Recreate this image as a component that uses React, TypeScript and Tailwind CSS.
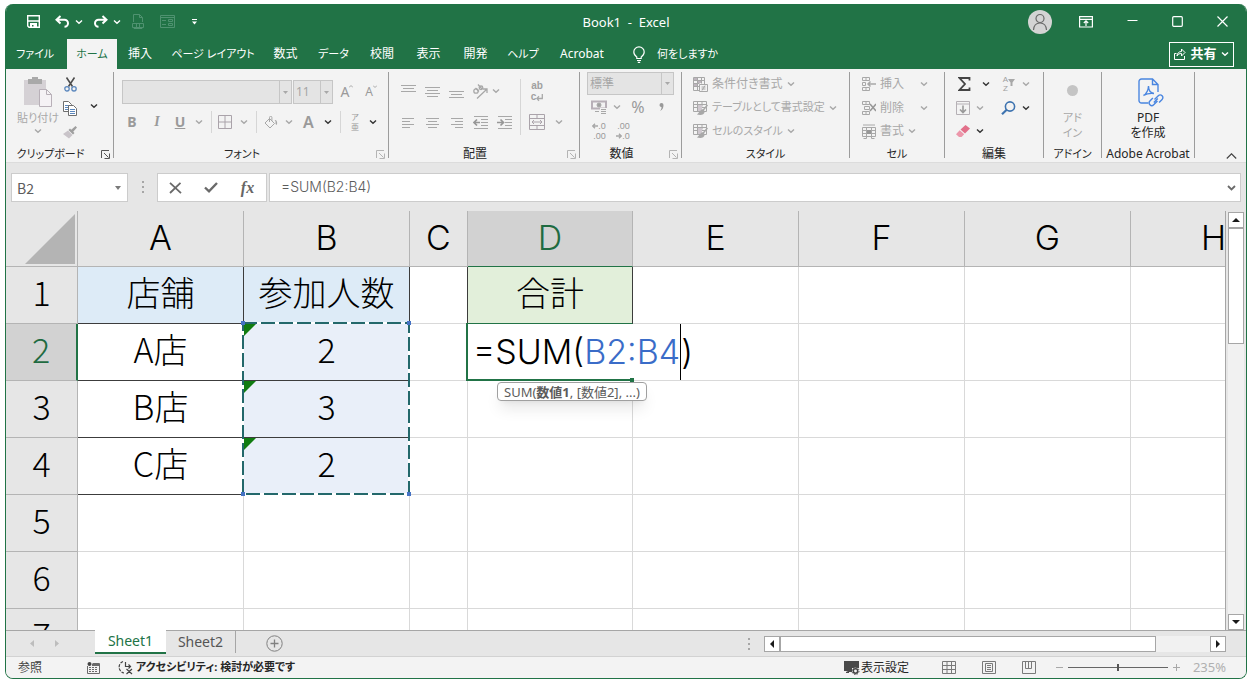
import React from 'react';

const UI_FONT = "font-['Noto_Sans','Noto_Sans_CJK_JP',sans-serif] [font-feature-settings:'palt']";
const CELL_FONT = "font-['Noto_Sans_CJK_JP',sans-serif] font-light";
const LATIN_FONT = "font-['Inter','Noto_Sans_CJK_JP',sans-serif] font-light";

interface IconProps {
    w: number;
    h: number;
    color?: string;
    strokeWidth?: number;
    className?: string;
    children: React.ReactNode;
}

const Icon: React.FC<IconProps> = ({ w, h, color = '#a8a8a8', strokeWidth = 1, className = '', children }) => (
    <svg
        width={w}
        height={h}
        viewBox={`0 0 ${w} ${h}`}
        fill="none"
        stroke={color}
        strokeWidth={strokeWidth}
        className={`shrink-0 ${className}`}
        aria-hidden="true"
    >
        {children}
    </svg>
);

const Chevron: React.FC<{ color?: string }> = ({ color = '#a8a8a8' }) => (
    <Icon w={8} h={6} color={color} strokeWidth={1.4}>
        <path d="M1 1.5 4 4.3 7 1.5" />
    </Icon>
);

const DARK = '#333333';

interface ToolProps {
    label: string;
    className?: string;
    children: React.ReactNode;
}

const Tool: React.FC<ToolProps> = ({ label, className = 'w-6', children }) => (
    <button type="button" aria-label={label} className={`flex h-6 shrink-0 items-center justify-center ${className}`}>
        {children}
    </button>
);

const Lines: React.FC<{ rows: [number, number][]; top?: number }> = ({ rows, top = 0 }) => (
    <Icon w={15} h={15}>
        {rows.map(([x, len], i) => (
            <path key={i} d={`M${x} ${top + i * 3 + 0.5}h${len}`} />
        ))}
    </Icon>
);

interface GroupProps {
    title: string;
    className: string;
    launcher?: string;
    children: React.ReactNode;
}

const Group: React.FC<GroupProps> = ({ title, className, launcher, children }) => (
    <section className={`flex h-[86px] shrink-0 flex-col border-r border-[#9c9c9c] ${className}`}>
        <div className="flex h-[74px]">{children}</div>
        <div
            className={`relative flex h-3 justify-center pt-[2px] leading-3 whitespace-nowrap text-[#262626] ${launcher ? 'pr-[18px]' : ''}`}
        >
            <span>{title}</span>
            {launcher && (
                <button type="button" aria-label={`${title}の設定`} className="absolute top-1 right-[3px]">
                    <Icon w={9} h={9} color={launcher}>
                        <path d="M.5 8V.5H8M3 3l4.5 4.5M8.5 3.5v5h-5" />
                    </Icon>
                </button>
            )}
        </div>
    </section>
);

const Combo: React.FC<{ label: string; value: string; className: string }> = ({ label, value, className }) => (
    <div className={`flex items-center border border-[#c6c6c6] bg-[#e4e4e4] ${className}`}>
        <select aria-label={label} className="h-full min-w-0 flex-1 appearance-none pl-[2px] text-xs text-[#a6a6a6] outline-none">
            <option>{value}</option>
        </select>
        <span className="flex h-full w-3 items-center justify-center border-l border-[#c6c6c6]">
            <Icon w={5} h={3} color="none">
                <path d="M0 0h5L2.5 3z" fill="#a8a8a8" />
            </Icon>
        </span>
    </div>
);

const Separator: React.FC<{ className?: string }> = ({ className = 'h-[22px]' }) => (
    <span className={`w-px shrink-0 bg-[#d6d6d6] ${className}`} />
);

const TitleBar = () => (
    <header className="grid h-[35px] shrink-0 grid-cols-[1fr_auto_1fr] items-center text-white">
        <div className="flex items-center pl-2">
            <Tool label="上書き保存" className="w-[39px]">
                <Icon w={13} h={13} color="#ffffff" strokeWidth={1.4}>
                    <path d="M.7.7h11.6v11.6H2L.7 11z" />
                    <path d="M.7 6h11.6" strokeWidth={1.6} />
                    <path d="M3 8h7v4H6.5v-2H5v2H3z" fill="#ffffff" stroke="none" />
                </Icon>
            </Tool>
            <Tool label="元に戻す" className="w-[18px]">
                <Icon w={15} h={13} color="#ffffff" strokeWidth={2}>
                    <path d="M5.5 1 1.5 4.8l4 3.7M2 4.8h7.5a3.5 3.5 0 0 1 0 7" />
                </Icon>
            </Tool>
            <Tool label="元に戻すの一覧" className="w-4">
                <Chevron color="#ffffff" />
            </Tool>
            <Tool label="やり直し" className="w-[26px]">
                <Icon w={15} h={13} color="#ffffff" strokeWidth={2}>
                    <path d="m9.5 1 4 3.8-4 3.7M13 4.8H5.5a3.5 3.5 0 0 0 0 7" />
                </Icon>
            </Tool>
            <Tool label="やり直しの一覧" className="w-2">
                <Chevron color="#ffffff" />
            </Tool>
            <Tool label="印刷" className="w-[34px]">
                <Icon w={12} h={15} color="#4f9270">
                    <path d="M1.5 8V.5h6l3 3V8M7.5.5v3h3M.5 9.5h11v4H.5zM4.5 9.5v4h3v-4M2 13.5v1h8v-1" />
                </Icon>
            </Tool>
            <Tool label="フォーム" className="w-6">
                <Icon w={15} h={13} color="#4f9270">
                    <path d="M.5.5h14v12H.5zM.5 2.5h14M2 5.5h4M2 9.5h4M8.5 4.5h4v2h-4zM8.5 8.5h4v2h-4z" />
                </Icon>
            </Tool>
            <Tool label="クイック アクセスのカスタマイズ" className="w-[30px]">
                <Icon w={5} h={6} color="none">
                    <path d="M0 0h5v1H0zM0 2.5h5L2.5 5.5z" fill="#ffffff" />
                </Icon>
            </Tool>
        </div>
        <h1 className="pt-[2px] text-[13px] whitespace-pre">Book1  -  Excel</h1>
        <div className="flex items-center justify-end pr-[18px]">
            <button type="button" aria-label="アカウント" className="mr-[27px] flex size-6 items-center justify-center rounded-full bg-[#d4d4d4]">
                <Icon w={16} h={18} color="#6a6a6a" strokeWidth={1.2}>
                    <circle cx="8" cy="5.5" r="4" />
                    <path d="M1.5 17c.3-4.5 3-7 6.5-7s6.2 2.5 6.5 7" />
                </Icon>
            </button>
            <button type="button" aria-label="リボンの表示オプション" className="mr-[34px]">
                <Icon w={14} h={12} color="#ffffff" strokeWidth={1.2}>
                    <path d="M.6.6h12.8v10.4H.6zM.6 3.3h12.8M7 10V5M4.8 7 7 4.8 9.2 7" />
                </Icon>
            </button>
            <button type="button" aria-label="最小化" className="mr-[34px]">
                <Icon w={11} h={11} color="#ffffff">
                    <path d="M.5 4.5h10" />
                </Icon>
            </button>
            <button type="button" aria-label="最大化" className="mr-[34px]">
                <Icon w={11} h={11} color="#ffffff" strokeWidth={1.2}>
                    <rect x=".7" y=".7" width="9.6" height="9.6" rx="1" />
                </Icon>
            </button>
            <button type="button" aria-label="閉じる">
                <Icon w={11} h={11} color="#ffffff" strokeWidth={1.2}>
                    <path d="m.5.5 10 10M10.5.5l-10 10" />
                </Icon>
            </button>
        </div>
    </header>
);

const ribbonTabs = [
    { name: 'ファイル', className: 'w-[58px] mr-[3px] text-[11px]' },
    { name: 'ホーム', className: 'w-[50px] bg-[#f3f3f3] text-[11px] text-[#217346]' },
    { name: '挿入', className: 'w-[46px]' },
    { name: 'ページ レイアウト', className: 'w-[100px] text-[11px]' },
    { name: '数式', className: 'w-[45px]' },
    { name: 'データ', className: 'w-[51px] text-[11px]' },
    { name: '校閲', className: 'w-[46px]' },
    { name: '表示', className: 'w-[47px]' },
    { name: '開発', className: 'w-[47px]' },
    { name: 'ヘルプ', className: 'w-12 text-[11px]' },
    { name: 'Acrobat', className: 'w-[70px]' },
];

const RibbonTabs = () => (
    <nav className="flex h-[30px] shrink-0 items-stretch text-xs text-white">
        {ribbonTabs.map((tab) => (
            <button key={tab.name} type="button" className={`shrink-0 whitespace-nowrap ${tab.className}`}>
                {tab.name}
            </button>
        ))}
        <button type="button" className="flex items-center gap-3 pl-4 text-[11px] whitespace-nowrap">
            <Icon w={12} h={17} color="#ffffff" strokeWidth={1.2}>
                <path d="M3.8 12.5V11C2 9.8.8 8.3.8 6a5.2 5.2 0 0 1 10.4 0c0 2.3-1.2 3.8-3 5v1.5zM4 14.5h4M4.8 16.4h2.4" />
            </Icon>
            何をしますか
        </button>
        <button
            type="button"
            className="mr-3 ml-auto flex h-[25px] w-[65px] shrink-0 items-center justify-center gap-1 self-center border border-white text-[13px] font-bold"
        >
            <Icon w={12} h={12} color="#ffffff">
                <path d="M2.5 5.5h-2v6h10V8M3 8c.3-3 2-4.5 4.5-4.5V1L11 4.5 7.5 8V5.5C5.5 5.5 4 6 3 8z" />
            </Icon>
            共有
            <Chevron color="#ffffff" />
        </button>
    </nav>
);

const ClipboardGroup = () => (
    <Group title="クリップボード" className="w-[108px] text-[11px]" launcher="#555555">
        <button type="button" className="ml-2 flex w-12 flex-col items-center pt-1 text-[11px] leading-4 whitespace-nowrap text-[#a8a8a8]">
            <Icon w={28} h={31}>
                <path d="M0 4h22v25H0z" fill="#d5d1d5" stroke="none" />
                <path d="M4 3h4V1h6v2h4v5H4z" fill="#a9a9a9" stroke="none" />
                <path d="M15.5 13.5h7l5 5v12h-12z" fill="#f5f2f5" stroke="#b8b0b8" />
                <path d="M22.5 13.5v5h5" stroke="#b8b0b8" />
            </Icon>
            <span className="mt-[3px] mb-[2px]">貼り付け</span>
            <Chevron />
        </button>
        <div className="flex w-4 flex-col">
            <Tool label="切り取り" className="w-4">
                <Icon w={13} h={15} color="#4f4f4f" strokeWidth={1.6}>
                    <path d="m2.5.5 6 9M10.5.5l-6 9" />
                    <circle cx="3" cy="11.8" r="2.2" stroke="#5b87bd" strokeWidth={1.3} />
                    <circle cx="10" cy="11.8" r="2.2" stroke="#5b87bd" strokeWidth={1.3} />
                </Icon>
            </Tool>
            <Tool label="コピー" className="w-4">
                <Icon w={14} h={15} color="#6f6f6f">
                    <path d="M.5.5h5l3 3v7h-8z" fill="#ffffff" />
                    <path d="M2 4.5h4M2 6.5h4M2 8.5h4" stroke="#5b87bd" />
                    <path d="M5.5 4.5h5l3 3v7h-8z" fill="#ffffff" />
                    <path d="M7 8.5h5M7 10.5h5M7 12.5h5" stroke="#5b87bd" />
                </Icon>
            </Tool>
            <Tool label="書式のコピー/貼り付け" className="w-4">
                <Icon w={14} h={13} color="none">
                    <path d="M12.5 0 14 1.5 10 6 8 4zM7 2.5 11.5 7 10 8.5 5.5 4z" fill="#9f9f9f" />
                    <path d="M5 4.5 9.5 9 6 12.5 0 8z" fill="#c9c4c9" />
                </Icon>
            </Tool>
        </div>
        <Tool label="コピーの一覧" className="mt-[22px] w-[31px]">
            <Chevron color={DARK} />
        </Tool>
    </Group>
);

const FontGroup = () => (
    <Group title="フォント" className="w-[275px] text-[11px]" launcher="#b4b4b4">
        <div className="flex flex-col pt-2">
            <div className="flex items-center pl-2 text-sm text-[#9a9a9a]">
                <Combo label="フォント" value="" className="h-6 w-[170px]" />
                <Combo label="フォント サイズ" value="11" className="ml-px h-6 w-10" />
                <Tool label="フォント サイズの拡大" className="ml-[2px] w-6">
                    A
                    <Icon w={4} h={3} className="mb-3">
                        <path d="m0 2.5 2-2 2 2" />
                    </Icon>
                </Tool>
                <Tool label="フォント サイズの縮小">
                    <span className="text-xs">A</span>
                    <Icon w={4} h={3} className="mb-3">
                        <path d="m0 .5 2 2 2-2" />
                    </Icon>
                </Tool>
            </div>
            <div className="mt-[6px] flex items-center pl-[6px] text-sm text-[#9a9a9a]">
                <Tool label="太字">
                    <b>B</b>
                </Tool>
                <Tool label="斜体" className="w-[26px]">
                    <i className="font-['Liberation_Serif',serif] font-bold">I</i>
                </Tool>
                <Tool label="下線" className="w-5">
                    <span className="font-bold underline">U</span>
                </Tool>
                <Tool label="下線の種類" className="w-[18px]">
                    <Chevron />
                </Tool>
                <Separator className="ml-[3px] h-[22px]" />
                <Tool label="罫線" className="w-[26px]">
                    <Icon w={14} h={14} color="#aaa3aa">
                        <path d="M.5.5h13v13H.5zM7 .5v13M.5 7h13" />
                    </Icon>
                </Tool>
                <Tool label="罫線の種類" className="w-3">
                    <Chevron />
                </Tool>
                <Separator className="ml-[6px] h-[22px]" />
                <Tool label="塗りつぶしの色" className="w-[28px]">
                    <Icon w={14} h={13}>
                        <path d="m5.5 2.5 5 5-4.5 4.5-5-5zM5.5 6V1.5a1.2 1.2 0 0 1 2.4 0V5" />
                        <path d="M11.5 8c0-2 .5-3-1-4 2.5 0 3 2 2.5 5z" fill="#a8a8a8" stroke="none" />
                    </Icon>
                </Tool>
                <Tool label="塗りつぶしの色の一覧" className="w-2">
                    <Chevron />
                </Tool>
                <Tool label="フォントの色" className="w-[31px]">
                    <span className="text-base font-semibold">A</span>
                </Tool>
                <Tool label="フォントの色の一覧" className="w-2">
                    <Chevron color={DARK} />
                </Tool>
                <Separator className="ml-2 h-[22px]" />
                <Tool label="ふりがな" className="w-[28px]">
                    <span className="flex flex-col text-[8px] leading-[10px]">
                        <span>ア</span>
                        <span>亜</span>
                    </span>
                </Tool>
                <Tool label="ふりがなの一覧" className="w-2">
                    <Chevron color={DARK} />
                </Tool>
            </div>
        </div>
    </Group>
);

const AlignmentGroup = () => (
    <Group title="配置" className="w-[191px] text-xs" launcher="#b4b4b4">
        <div className="flex flex-col pt-[7px] pl-[7px]">
            <div className="flex">
                <Tool label="上揃え"><Lines rows={[[0, 15], [2, 11], [0, 15]]} top={1} /></Tool>
                <Tool label="上下中央揃え"><Lines rows={[[0, 15], [2, 11], [0, 15], [2, 11]]} top={3} /></Tool>
                <Tool label="下揃え"><Lines rows={[[0, 15], [2, 11], [0, 15]]} top={7} /></Tool>
                <Tool label="方向">
                    <Icon w={16} h={15} strokeWidth={1.3}>
                        <path d="m5 14.5 9.5-9M11 5h4v4" />
                        <circle cx="4" cy="7" r="2.2" />
                        <path d="M3.5 4 7 7.5M6 .5l4 4.5" />
                        <circle cx="9" cy="3.8" r="1.8" />
                    </Icon>
                </Tool>
                <Tool label="方向の一覧" className="w-2"><Chevron /></Tool>
            </div>
            <div className="mt-[7px] flex">
                <Tool label="左揃え"><Lines rows={[[1, 12], [1, 8], [1, 12], [1, 8]]} top={3} /></Tool>
                <Tool label="中央揃え"><Lines rows={[[1, 13], [3, 9], [1, 13], [3, 9]]} top={3} /></Tool>
                <Tool label="右揃え"><Lines rows={[[2, 12], [6, 8], [2, 12], [6, 8]]} top={3} /></Tool>
                <Tool label="インデントを減らす">
                    <Icon w={15} h={13}>
                        <path d="M1 .5h14M8 3.5h7M8 6.5h7M8 9.5h7M1 12.5h14" />
                        <path d="M7 6.5H1M4 3.5l-3 3 3 3" strokeWidth={1.7} stroke="#979797" />
                    </Icon>
                </Tool>
                <Tool label="インデントを増やす">
                    <Icon w={15} h={13}>
                        <path d="M1 .5h14M8 3.5h7M8 6.5h7M8 9.5h7M1 12.5h14" />
                        <path d="M0 6.5h6M3.5 3.5l3 3-3 3" strokeWidth={1.7} stroke="#979797" />
                    </Icon>
                </Tool>
            </div>
        </div>
        <Separator className="mt-[7px] ml-1 h-[56px]" />
        <div className="flex flex-col pt-[7px]">
            <Tool label="折り返して全体を表示する" className="w-8">
                <span className="flex flex-col font-['Liberation_Sans',sans-serif] text-[10px] leading-[11px] font-bold text-[#a0a0a0]">
                    <span>ab</span>
                    <span className="flex items-end">
                        c
                        <Icon w={7} h={8} strokeWidth={1.3}>
                            <path d="M6.3 0v4.5H1M3 2.3.8 4.5 3 6.7" />
                        </Icon>
                    </span>
                </span>
            </Tool>
            <div className="mt-[7px] flex">
                <Tool label="セルを結合して中央揃え" className="w-8">
                    <Icon w={16} h={16} color="#aaa3aa">
                        <path d="M.5.5h15v15H.5zM.5 4.5h15M.5 11.5h15M8 .5v4M8 11.5v4M3 8h10M5 6 3 8l2 2M11 6l2 2-2 2" />
                    </Icon>
                </Tool>
                <Tool label="結合の一覧" className="w-3"><Chevron /></Tool>
            </div>
        </div>
    </Group>
);

const LeftArrow = () => (
    <Icon w={6} h={6} strokeWidth={1.4}>
        <path d="M6 3H1M3 .8.8 3 3 5.2" />
    </Icon>
);

const RightArrow = () => (
    <Icon w={6} h={6} strokeWidth={1.4}>
        <path d="M0 3h5M3 .8 5.2 3 3 5.2" />
    </Icon>
);

const NumberGroup = () => (
    <Group title="数値" className="w-[102px] text-xs" launcher="#b4b4b4">
        <div className="flex flex-col pl-[7px]">
            <Combo label="表示形式" value="標準" className="h-[23px] w-[87px]" />
            <div className="flex text-[#9a9a9a]">
                <Tool label="通貨表示形式">
                    <Icon w={16} h={15}>
                        <path d="M1 1.5h14v7H1z" strokeWidth={2} stroke="#b8b0b8" />
                        <circle cx="8" cy="5" r="2" fill="#a0a0a0" />
                        <path d="M9 8h7v7H9z" fill="#f3f3f3" stroke="none" />
                        <path d="M10 9.5h5M10 11.5h5M10 13.5h5M4 11.5h4" />
                    </Icon>
                </Tool>
                <Tool label="通貨の一覧" className="w-3"><Chevron /></Tool>
                <Tool label="パーセント スタイル" className="w-[30px] text-base">%</Tool>
                <Tool label="桁区切りスタイル" className="w-4">
                    <Icon w={5} h={8} color="none">
                        <path d="M.5 2a2 2 0 1 1 4 0c0 3-1 5-3.5 6 1.2-1.5 1.5-2.5 1.5-4-1.2 0-2-.8-2-2z" fill="#999999" />
                    </Icon>
                </Tool>
            </div>
            <div className="flex font-['Liberation_Sans',sans-serif] text-[9px] leading-[10px] text-[#9a9a9a]">
                <Tool label="小数点以下の表示桁数を増やす">
                    <span className="flex flex-col items-end">
                        <span className="flex items-center"><LeftArrow />.0</span>
                        <span>.00</span>
                    </span>
                </Tool>
                <Tool label="小数点以下の表示桁数を減らす">
                    <span className="flex flex-col items-end">
                        <span>.00</span>
                        <span className="flex items-center"><RightArrow />.0</span>
                    </span>
                </Tool>
            </div>
        </div>
    </Group>
);

const TableIcon = () => (
    <Icon w={15} h={14}>
        <path d="M.5.5h13v10H.5zM.5 3.5h13M.5 6.5h13M4.5.5v10M9 .5v5" />
        <path d="M5 4h4v6H5z" fill="#cfc8cf" stroke="none" />
        <path d="m14.5 4-5 6M9.5 9c-1.5.5-2 2-4 4 3 .5 5-.5 5.5-2.5z" fill="#a8a8a8" strokeWidth={1.5} />
    </Icon>
);

const StylesGroup = () => (
    <Group title="スタイル" className="w-[168px] text-[11px]">
        <div className="flex flex-col pl-[11px] text-[11px] text-[#a8a8a8]">
            <button type="button" className="flex h-6 items-center gap-1 text-xs whitespace-nowrap">
                <Icon w={15} h={15}>
                    <path d="M.5.5h11v13H.5zM.5 3.5h11M.5 6.5h6M.5 9.5h6M4.5.5v13M8.5.5v6" />
                    <path d="M1 1h3v2H1zM1 7h3v2H1zM5 4h3v2H5z" fill="#bdb5bd" stroke="none" />
                    <path d="M6.5 7.5h8v7h-8z" fill="#f3f3f3" />
                    <path d="M8.5 10h4M8.5 12h4M12 8.5l-3 5" />
                </Icon>
                条件付き書式
                <Chevron />
            </button>
            <button type="button" className="flex h-[23px] items-center gap-1 whitespace-nowrap">
                <TableIcon />
                テーブルとして書式設定
                <Chevron />
            </button>
            <button type="button" className="flex h-6 items-center gap-1 whitespace-nowrap">
                <TableIcon />
                セルのスタイル
                <Chevron />
            </button>
        </div>
    </Group>
);

const CellsGroup = () => (
    <Group title="セル" className="w-[95px] text-[11px]">
        <div className="flex flex-col pl-3 text-xs text-[#a8a8a8]">
            <button type="button" className="flex h-6 w-[66px] items-center gap-1">
                <Icon w={14} h={14}>
                    <path d="M.5.5h7v3h-7zM4 .5v3M.5 10.5h7v3h-7zM4 10.5v3M.5 5.5h3v3h-3z" />
                    <path d="M14 7H6M8.5 4.5 6 7l2.5 2.5" strokeWidth={1.5} />
                </Icon>
                挿入
                <span className="ml-auto"><Chevron /></span>
            </button>
            <button type="button" className="flex h-[23px] w-[66px] items-center gap-1">
                <Icon w={14} h={14}>
                    <path d="M.5.5h7v3h-7zM4 .5v3M.5 10.5h7v3h-7zM4 10.5v3M2.5 5.5h5v3h-5z" />
                    <path d="m8 3 6 7M14 3l-6 7" strokeWidth={1.5} stroke="#979797" />
                </Icon>
                削除
                <span className="ml-auto"><Chevron /></span>
            </button>
            <button type="button" className="flex h-6 items-center gap-1">
                <Icon w={14} h={15}>
                    <path d="M.5 3.5h13v9H.5zM.5 6.5h13M.5 9.5h13M4.5 3.5v11h-3M9.5 3.5v11h3M1 1h12" />
                    <path d="M5 6h4v4H5z" fill="#979797" stroke="none" />
                </Icon>
                書式
                <Chevron />
            </button>
        </div>
    </Group>
);

const EditingGroup = () => (
    <Group title="編集" className="w-[99px] text-xs">
        <div className="flex flex-col pl-[7px]">
            <div className="flex">
                <Tool label="合計">
                    <Icon w={13} h={14} color="#444444" strokeWidth={1.8}>
                        <path d="M11.5 3.5V1H1.5L7 7l-5.5 6h10v-2.5" />
                    </Icon>
                </Tool>
                <Tool label="合計の一覧" className="w-5"><Chevron color={DARK} /></Tool>
                <Tool label="並べ替えとフィルター" className="w-[26px]">
                    <span className="flex flex-col font-['Liberation_Sans',sans-serif] text-[8px] leading-[9px] text-[#a0a0a0]">
                        <span>A</span>
                        <span>Z</span>
                    </span>
                    <Icon w={7} h={7} color="none" className="mb-1">
                        <path d="M0 0h7L4.5 3.5V7h-2V3.5z" fill="#a8a8a8" />
                    </Icon>
                </Tool>
                <Tool label="並べ替えの一覧" className="w-2"><Chevron /></Tool>
            </div>
            <div className="flex h-[23px] items-center">
                <Tool label="フィル" className="w-[22px]">
                    <Icon w={14} h={14} color="#b5b0b5">
                        <path d="M.5.5h13v13H.5zM.5 3h13" />
                        <path d="M7 4.5V11M4 8.5l3 3 3-3" strokeWidth={1.6} stroke="#999999" />
                    </Icon>
                </Tool>
                <Tool label="フィルの一覧" className="w-3"><Chevron /></Tool>
                <Tool label="検索と選択" className="ml-2 w-7">
                    <Icon w={15} h={14} color="#3f74b0" strokeWidth={1.6}>
                        <circle cx="9" cy="5.5" r="4.6" />
                        <path d="M5.7 8.8 1 13.2" strokeWidth={2.2} />
                    </Icon>
                </Tool>
                <Tool label="検索の一覧" className="w-2"><Chevron color={DARK} /></Tool>
            </div>
            <div className="flex">
                <Tool label="クリア" className="w-[22px]">
                    <Icon w={14} h={12} color="none">
                        <path d="M9.5 0 14 3.5 9 8.5 4.5 4.5z" fill="#e2708a" />
                        <path d="M3.7 5.2 8.2 9.3 5.5 12H3L0 9.2z" fill="#ec96aa" />
                    </Icon>
                </Tool>
                <Tool label="クリアの一覧" className="w-3"><Chevron color={DARK} /></Tool>
            </div>
        </div>
    </Group>
);

const Ribbon = () => (
    <div className="flex h-[94px] shrink-0 border-b border-[#dcdcdc] bg-[#f3f3f3] pt-[3px]">
        <ClipboardGroup />
        <FontGroup />
        <AlignmentGroup />
        <NumberGroup />
        <StylesGroup />
        <CellsGroup />
        <EditingGroup />
        <Group title="アドイン" className="w-[58px] text-[11px]">
            <button type="button" className="flex w-full flex-col items-center pt-[13px] leading-[15px] text-[#a8a8a8]">
                <span className="mb-[14px] size-[11px] rounded-full bg-[#c4c4c4]" />
                <span>アド</span>
                <span>イン</span>
            </button>
        </Group>
        <Group title="Adobe Acrobat" className="w-[93px] text-xs">
            <button type="button" className="flex w-full flex-col items-center pt-[6px] text-xs leading-[15px] text-[#262626]">
                <Icon w={26} h={30} color="#4a86e0" strokeWidth={1.4} className="mb-[2px] ml-[6px]">
                    <path d="M10 25H3.5a2.5 2.5 0 0 1-2.5-2.5v-19A2.5 2.5 0 0 1 3.5 1h11L20 6.5V14M14.5 1v5.5H20" />
                    <path d="M5.5 17.5c3-1.5 5-6 5-9.5 0 4.5 2.5 7 5.5 7.5-4-.5-7 0-10.5 2z" />
                    <path d="m16.5 21.5 3.8-3.8a2.6 2.6 0 0 1 3.8 3.8l-3 3" />
                    <path d="m19.5 23-3.8 3.8a2.6 2.6 0 0 1-3.8-3.8l3-3M15.8 24.5l4-4" />
                </Icon>
                <span>PDF</span>
                <span>を作成</span>
            </button>
        </Group>
        <button type="button" aria-label="リボンを折りたたむ" className="mt-auto mr-[9px] mb-[3px] ml-auto">
            <Icon w={11} h={6} color="#444444" strokeWidth={1.2}>
                <path d="m.8 5.5 4.7-4.7 4.7 4.7" />
            </Icon>
        </button>
    </div>
);

const Dots = () => (
    <Icon w={2} h={12} color="none">
        <path d="M0 0h2v2H0zM0 5h2v2H0zM0 10h2v2H0z" fill="#a6a6a6" />
    </Icon>
);

const FormulaBar = () => (
    <div className="flex h-12 shrink-0 items-start pt-[10px] pr-[5px] pl-[5px] text-[#5c5c5c]">
        <div className="flex h-[29px] w-[117px] items-center border border-[#cccccc] bg-white pr-[6px]">
            <input
                aria-label="名前ボックス"
                defaultValue="B2"
                className="min-w-0 flex-1 pl-[5px] font-['Noto_Sans_CJK_JP',sans-serif] text-sm leading-5 outline-none"
            />
            <button type="button" aria-label="名前の一覧">
                <Icon w={6} h={4} color="none">
                    <path d="M0 0h6L3 4z" fill="#7a7a7a" />
                </Icon>
            </button>
        </div>
        <span className="flex h-7 w-[29px] items-center justify-center"><Dots /></span>
        <div className="flex h-[29px] w-[110px] items-center border border-[#cccccc] bg-white">
            <Tool label="キャンセル" className="w-[34px]">
                <Icon w={13} h={12} color="#6a6a6a" strokeWidth={1.8}>
                    <path d="m1 .8 11 10.4M11.5.8 1 11" />
                </Icon>
            </Tool>
            <Tool label="入力" className="w-[37px]">
                <Icon w={14} h={11} color="#6a6a6a" strokeWidth={2.4}>
                    <path d="M1 5.5 5 9.3 13 1" />
                </Icon>
            </Tool>
            <Tool label="関数の挿入" className="w-[37px]">
                <i className="font-['Liberation_Serif',serif] text-base font-bold text-[#666666]">fx</i>
            </Tool>
        </div>
        <div className="ml-[2px] flex h-[29px] min-w-0 flex-1 items-center border border-[#cccccc] bg-white pr-1">
            <input
                aria-label="数式バー"
                defaultValue="=SUM(B2:B4)"
                className="min-w-0 flex-1 pb-[2px] pl-[11px] font-['Inter',sans-serif] text-sm leading-5 font-light outline-none"
            />
            <button type="button" aria-label="数式バーの展開">
                <Icon w={9} h={6} color="#6a6a6a" strokeWidth={1.8}>
                    <path d="M1 1l3.5 3.5L8 1" />
                </Icon>
            </button>
        </div>
    </div>
);

const columns = [
    { name: 'A', width: 'w-[166px]' },
    { name: 'B', width: 'w-[166px]' },
    { name: 'C', width: 'w-[58px]' },
    { name: 'D', width: 'w-[165px]' },
    { name: 'E', width: 'w-[166px]' },
    { name: 'F', width: 'w-[166px]' },
    { name: 'G', width: 'w-[166px]' },
    { name: 'H', width: 'w-[166px]' },
];

const rows = [1, 2, 3, 4, 5, 6, 7];

const values: Record<string, string> = {
    A1: '店舗',
    B1: '参加人数',
    D1: '合計',
    A2: 'A店',
    A3: 'B店',
    A4: 'C店',
    B2: '2',
    B3: '3',
    B4: '2',
};

const cellStyles: Record<string, string> = {
    A1: 'bg-[#ddebf7] border-[#3c3c3c]',
    B1: 'bg-[#ddebf7] border-[#3c3c3c]',
    A2: 'bg-white border-[#3c3c3c]',
    A3: 'bg-white border-[#3c3c3c]',
    A4: 'bg-white border-[#3c3c3c]',
    B2: 'bg-[#e9eff9] border-[#3c3c3c]',
    B3: 'bg-[#e9eff9] border-[#3c3c3c]',
    B4: 'bg-[#e9eff9] border-[#3c3c3c]',
    C1: 'bg-white border-b-[#d9d9d9] border-r-[#3c3c3c]',
    D1: 'bg-[#e2efda] border-r-[#3c3c3c] border-b-[#217346]',
};

const NumberAsTextMark = () => (
    <Icon w={12} h={12} color="none" className="absolute top-0 left-0">
        <path d="M0 0h12L0 12z" fill="#107c10" />
    </Icon>
);

const MarchingAnts = () => (
    <Icon w={170} h={175} color="none" className="absolute -top-[3px] -left-[3px] z-10">
        <rect x="2" y="2" width="166" height="171" stroke="#ffffff" strokeWidth={2} />
        <rect x="2" y="2" width="166" height="171" stroke="#23686b" strokeWidth={2} strokeDasharray="14 4" />
        <path d="M0 0h4v4H0zM166 0h4v4h-4zM0 171h4v4H0zM166 171h4v4h-4z" fill="#4472c4" />
    </Icon>
);

const CellEditor = () => (
    <>
        <div
            className={`absolute top-0 -left-px z-20 flex h-14 items-center bg-white pr-[2px] pl-[6px] text-left whitespace-nowrap ${LATIN_FONT}`}
        >
            =SUM(<span className="text-[#3a6cc8]">B2:B4</span>
            <span className="h-full w-px bg-black" />)
        </div>
        <div className="absolute -top-px -left-[2px] z-20 h-[58px] w-[166px] border-b-2 border-l-2 border-[#217346]">
            <span className="absolute -right-[2px] -bottom-[3px] size-1 bg-[#217346]" />
        </div>
        <div
            role="tooltip"
            className={`absolute top-[58px] left-[29px] z-30 flex h-[19px] items-center rounded border border-[#a0a0a0] bg-white px-[6px] text-[13px] font-normal whitespace-pre text-[#5c5c5c] shadow-lg ${UI_FONT}`}
        >
            SUM(<b>数値1</b>, [数値2], ...)
        </div>
    </>
);

const Sheet = () => (
    <div className={`min-w-0 flex-1 overflow-hidden ${CELL_FONT}`}>
        <table className="w-[1291px] table-fixed border-separate border-spacing-0 text-center text-[34px] leading-10 text-black">
            <thead>
                <tr className="h-14 bg-[#e6e6e6]">
                    <th className="w-[72px] border-r border-b border-[#b4b4b4] p-0 align-bottom">
                        <Icon w={50} h={50} color="none" className="mr-[2px] mb-[2px] ml-auto">
                            <path d="M50 0v50H0z" fill="#b4b4b4" />
                        </Icon>
                    </th>
                    {columns.map((col) => (
                        <th
                            key={col.name}
                            scope="col"
                            className={`border-r border-b p-0 pb-[2px] ${LATIN_FONT} ${col.width} ${
                                col.name === 'D' ? 'border-r-[#b4b4b4] border-b-[#217346] bg-[#d2d2d2] text-[#1f6b41]' : 'border-[#b4b4b4]'
                            }`}
                        >
                            {col.name}
                        </th>
                    ))}
                </tr>
            </thead>
            <tbody>
                {rows.map((row) => (
                    <tr key={row} className="h-[57px]">
                        <th
                            scope="row"
                            className={`border-b border-b-[#b4b4b4] p-0 pb-[6px] font-light ${
                                row === 2
                                    ? 'border-r-2 border-r-[#217346] bg-[#d2d2d2] text-[#1f6b41]'
                                    : 'border-r border-r-[#b4b4b4] bg-[#e6e6e6]'
                            }`}
                        >
                            {row}
                        </th>
                        {columns.map((col) => {
                            const address = `${col.name}${row}`;
                            return (
                                <td
                                    key={address}
                                    className={`relative border-r border-b p-0 pb-[6px] ${cellStyles[address] ?? 'border-[#d9d9d9] bg-white'}`}
                                >
                                    {values[address]}
                                    {col.name === 'B' && row > 1 && row < 5 && <NumberAsTextMark />}
                                    {address === 'B2' && <MarchingAnts />}
                                    {address === 'D2' && <CellEditor />}
                                </td>
                            );
                        })}
                    </tr>
                ))}
            </tbody>
        </table>
    </div>
);

const ScrollButton: React.FC<{ label: string; path: string }> = ({ label, path }) => (
    <button type="button" aria-label={label} className="flex size-4 shrink-0 items-center justify-center border border-[#a6a6a6] bg-white">
        <Icon w={8} h={8} color="none">
            <path d={path} fill="#1a1a1a" />
        </Icon>
    </button>
);

const VerticalScroll = () => (
    <div className="flex w-[21px] shrink-0 flex-col border-l border-[#a6a6a6] pt-px pr-[2px] pl-[2px]">
        <ScrollButton label="上へスクロール" path="M0 6h8L4 2z" />
        <div className="flex w-4 flex-1 flex-col bg-[#f1f1f1]">
            <div className="h-[116px] border border-[#a6a6a6] bg-white" />
        </div>
        <ScrollButton label="下へスクロール" path="M0 2h8L4 6z" />
    </div>
);

const SheetTabs = () => (
    <div className="flex h-[26px] shrink-0 border-t border-[#a6a6a6] text-sm text-[#555555]">
        <div className="flex w-[89px] items-center gap-5 pl-6">
            <button type="button" aria-label="前のシート">
                <Icon w={5} h={7} color="none"><path d="M4 0v7L0 3.5z" fill="#bdbdbd" /></Icon>
            </button>
            <button type="button" aria-label="次のシート">
                <Icon w={5} h={7} color="none"><path d="M0 0v7l4-3.5z" fill="#bdbdbd" /></Icon>
            </button>
        </div>
        <button type="button" className="-mt-px h-6 w-[71px] border-b-2 border-[#217346] bg-white text-[#217346]">Sheet1</button>
        <button type="button" className="h-[22px] w-[70px] border-r border-[#a6a6a6]">Sheet2</button>
        <button type="button" aria-label="新しいシート" className="ml-[30px]">
            <Icon w={17} h={17} color="#808080">
                <circle cx="8.5" cy="8.5" r="7.7" />
                <path d="M8.5 4.5v8M4.5 8.5h8" strokeWidth={1.3} />
            </Icon>
        </button>
        <div className="mr-5 ml-auto flex w-[478px] items-center">
            <Dots />
            <div className="ml-[14px] flex h-4 flex-1">
                <ScrollButton label="左へスクロール" path="M6 0v8L2 4z" />
                <div className="flex-1 bg-[#f1f1f1] pr-[54px]">
                    <div className="h-4 border border-[#a6a6a6] bg-white" />
                </div>
                <ScrollButton label="右へスクロール" path="M2 0v8l4-4z" />
            </div>
        </div>
    </div>
);

const StatusBar = () => (
    <footer className="flex h-[22px] shrink-0 items-center border-t border-[#d2d2d2] bg-[#f3f3f3] pr-5 pl-3 text-xs text-[#444444]">
        <span className="w-[69px]">参照</span>
        <Icon w={13} h={12} color="#6a6a6a">
            <path d="M.5 4v7.5h12V1.5H5.5M5 2.5h8M5 3.5h8" />
            <circle cx="2.5" cy="2" r="2" fill="#444444" stroke="none" />
            <path d="M2 5.5h9M2 7.5h9M2 9.5h9" strokeDasharray="2 1" />
        </Icon>
        <button type="button" className="ml-[18px] flex items-center gap-[2px] text-[11px] font-bold whitespace-nowrap text-[#262626]">
            <Icon w={16} h={15} color="#444444" strokeWidth={1.2}>
                <path d="M5 1.5a6 6 0 0 0 1 11.5" strokeDasharray="3 1.2" />
                <path d="M7.5 2v4.5h5M10.5 4.5l2 2-2 2M8.5 9l5.5 5M14 9l-5.5 5" />
            </Icon>
            アクセシビリティ: 検討が必要です
        </button>
        <button type="button" className="ml-auto flex items-center gap-px whitespace-nowrap text-[#262626]">
            <Icon w={16} h={14} color="none">
                <path d="M0 0h15v7H8v4H5v1H2v-1l2-1H0z" fill="#4a4a4a" />
                <circle cx="11.5" cy="10" r="3.5" fill="#f3f3f3" stroke="#444444" strokeDasharray="1.5 1.2" />
                <circle cx="11.5" cy="10" r="2.2" stroke="#444444" strokeWidth={1.5} />
            </Icon>
            表示設定
        </button>
        <div className="ml-[33px] flex items-center gap-[26px]">
            <button type="button" aria-label="標準">
                <Icon w={14} h={13} color="#7a7a7a"><path d="M.5.5h13v12H.5zM.5 4.5h13M.5 8.5h13M5 .5v12M9.5.5v12" /></Icon>
            </button>
            <button type="button" aria-label="ページ レイアウト">
                <Icon w={14} h={13} color="#7a7a7a"><path d="M.5.5h13v12H.5zM3.5 2.5h7v8h-7zM5 4.5h4M5 6.5h4M5 8.5h4" /></Icon>
            </button>
            <button type="button" aria-label="改ページ プレビュー">
                <Icon w={14} h={13} color="#7a7a7a"><path d="M.5.5h13v12H.5zM3.5.5v7h6v-7M6.5.5v7" /></Icon>
            </button>
        </div>
        <div className="ml-5 flex items-center">
            <button type="button" aria-label="縮小">
                <Icon w={7} h={7}><path d="M0 3.5h7" /></Icon>
            </button>
            <input
                type="range"
                aria-label="ズーム"
                defaultValue={50}
                className="mx-[5px] h-px w-[100px] appearance-none bg-[#666666] outline-none [&::-webkit-slider-thumb]:h-[7px] [&::-webkit-slider-thumb]:w-[2px] [&::-webkit-slider-thumb]:appearance-none [&::-webkit-slider-thumb]:bg-[#555555]"
            />
            <button type="button" aria-label="拡大">
                <Icon w={7} h={7}><path d="M0 3.5h7M3.5 0v7" /></Icon>
            </button>
        </div>
        <span className="w-[46px] text-right text-[13px] text-[#b0b0b0]">235%</span>
    </footer>
);

const App: React.FC = () => {
    return (
        <div className={`h-screen bg-white pt-1 pr-[5px] pb-[6px] pl-[5px] ${UI_FONT}`}>
            <div className="flex h-full flex-col overflow-hidden rounded-lg border-x border-b border-[#217346] bg-[#e6e6e6]">
                <div className="bg-[#217346]">
                    <TitleBar />
                    <RibbonTabs />
                </div>
                <Ribbon />
                <FormulaBar />
                <main className="flex min-h-0 flex-1">
                    <Sheet />
                    <VerticalScroll />
                </main>
                <SheetTabs />
                <StatusBar />
            </div>
        </div>
    );
};

export default App;
